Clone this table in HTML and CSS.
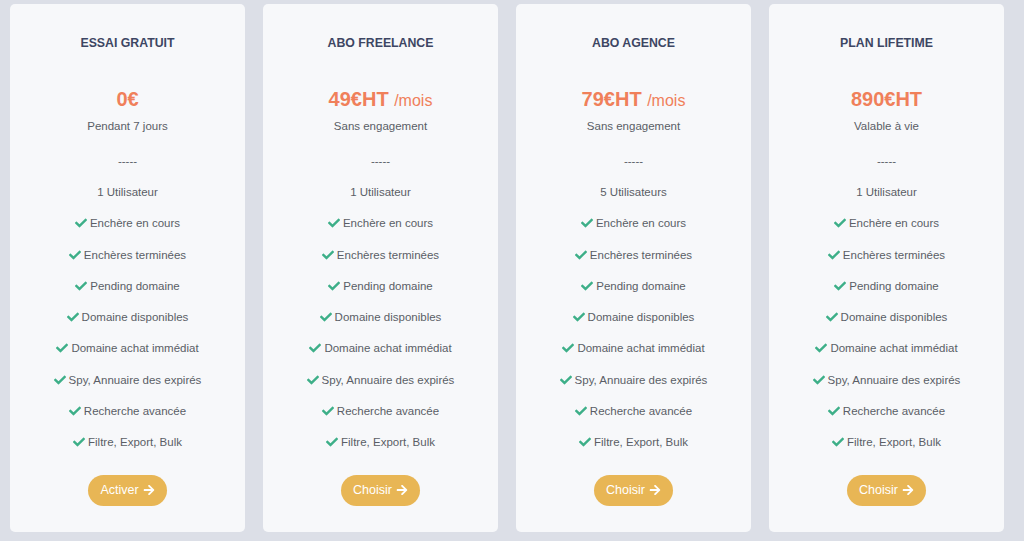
FILE: index.html
```html
<!DOCTYPE html>
<html lang="fr">
<head>
<meta charset="utf-8">
<link rel="stylesheet" href="styles.css">
</head>
<body>
<div class="plans">
  <div class="card">
    <h3 class="title">ESSAI GRATUIT</h3>
    <div class="price">0€</div>
    <div class="sub">Pendant 7 jours</div>
    <ul class="list">
      <li>-----</li>
      <li>1 Utilisateur</li>
      <li><svg class="chk" viewBox="0 0 512 512"><path d="M173.898 439.404l-166.4-166.4c-9.997-9.997-9.997-26.206 0-36.204l36.203-36.204c9.997-9.998 26.207-9.998 36.204 0L192 312.690 432.095 72.596c9.997-9.997 26.207-9.997 36.204 0l36.203 36.204c9.997 9.997 9.997 26.206 0 36.204l-294.4 294.401c-9.998 9.997-26.207 9.997-36.204-.001z"/></svg>Enchère en cours</li>
      <li><svg class="chk" viewBox="0 0 512 512"><path d="M173.898 439.404l-166.4-166.4c-9.997-9.997-9.997-26.206 0-36.204l36.203-36.204c9.997-9.998 26.207-9.998 36.204 0L192 312.690 432.095 72.596c9.997-9.997 26.207-9.997 36.204 0l36.203 36.204c9.997 9.997 9.997 26.206 0 36.204l-294.4 294.401c-9.998 9.997-26.207 9.997-36.204-.001z"/></svg>Enchères terminées</li>
      <li><svg class="chk" viewBox="0 0 512 512"><path d="M173.898 439.404l-166.4-166.4c-9.997-9.997-9.997-26.206 0-36.204l36.203-36.204c9.997-9.998 26.207-9.998 36.204 0L192 312.690 432.095 72.596c9.997-9.997 26.207-9.997 36.204 0l36.203 36.204c9.997 9.997 9.997 26.206 0 36.204l-294.4 294.401c-9.998 9.997-26.207 9.997-36.204-.001z"/></svg>Pending domaine</li>
      <li><svg class="chk" viewBox="0 0 512 512"><path d="M173.898 439.404l-166.4-166.4c-9.997-9.997-9.997-26.206 0-36.204l36.203-36.204c9.997-9.998 26.207-9.998 36.204 0L192 312.690 432.095 72.596c9.997-9.997 26.207-9.997 36.204 0l36.203 36.204c9.997 9.997 9.997 26.206 0 36.204l-294.4 294.401c-9.998 9.997-26.207 9.997-36.204-.001z"/></svg>Domaine disponibles</li>
      <li><svg class="chk" viewBox="0 0 512 512"><path d="M173.898 439.404l-166.4-166.4c-9.997-9.997-9.997-26.206 0-36.204l36.203-36.204c9.997-9.998 26.207-9.998 36.204 0L192 312.690 432.095 72.596c9.997-9.997 26.207-9.997 36.204 0l36.203 36.204c9.997 9.997 9.997 26.206 0 36.204l-294.4 294.401c-9.998 9.997-26.207 9.997-36.204-.001z"/></svg>Domaine achat immédiat</li>
      <li><svg class="chk" viewBox="0 0 512 512"><path d="M173.898 439.404l-166.4-166.4c-9.997-9.997-9.997-26.206 0-36.204l36.203-36.204c9.997-9.998 26.207-9.998 36.204 0L192 312.690 432.095 72.596c9.997-9.997 26.207-9.997 36.204 0l36.203 36.204c9.997 9.997 9.997 26.206 0 36.204l-294.4 294.401c-9.998 9.997-26.207 9.997-36.204-.001z"/></svg>Spy, Annuaire des expirés</li>
      <li><svg class="chk" viewBox="0 0 512 512"><path d="M173.898 439.404l-166.4-166.4c-9.997-9.997-9.997-26.206 0-36.204l36.203-36.204c9.997-9.998 26.207-9.998 36.204 0L192 312.690 432.095 72.596c9.997-9.997 26.207-9.997 36.204 0l36.203 36.204c9.997 9.997 9.997 26.206 0 36.204l-294.4 294.401c-9.998 9.997-26.207 9.997-36.204-.001z"/></svg>Recherche avancée</li>
      <li><svg class="chk" viewBox="0 0 512 512"><path d="M173.898 439.404l-166.4-166.4c-9.997-9.997-9.997-26.206 0-36.204l36.203-36.204c9.997-9.998 26.207-9.998 36.204 0L192 312.690 432.095 72.596c9.997-9.997 26.207-9.997 36.204 0l36.203 36.204c9.997 9.997 9.997 26.206 0 36.204l-294.4 294.401c-9.998 9.997-26.207 9.997-36.204-.001z"/></svg>Filtre, Export, Bulk</li>
    </ul>
    <a class="btn">Activer<svg class="arr" viewBox="0 0 448 512"><path d="M190.5 66.9l22.2-22.2c9.4-9.4 24.6-9.4 33.9 0L441 239c9.4 9.4 9.4 24.6 0 33.9L246.6 467.3c-9.4 9.4-24.6 9.4-33.900 0l-22.2-22.2c-9.5-9.5-9.3-25 .4-34.3L311.4 296H24c-13.3 0-24-10.7-24-24v-32c0-13.3 10.7-24 24-24h287.4L190.9 101.2c-9.8-9.3-10-24.8-.4-34.3z"/></svg></a>
  </div>

  <div class="card">
    <h3 class="title">ABO FREELANCE</h3>
    <div class="price">49€HT <span class="per">/mois</span></div>
    <div class="sub">Sans engagement</div>
    <ul class="list">
      <li>-----</li>
      <li>1 Utilisateur</li>
      <li><svg class="chk" viewBox="0 0 512 512"><path d="M173.898 439.404l-166.4-166.4c-9.997-9.997-9.997-26.206 0-36.204l36.203-36.204c9.997-9.998 26.207-9.998 36.204 0L192 312.690 432.095 72.596c9.997-9.997 26.207-9.997 36.204 0l36.203 36.204c9.997 9.997 9.997 26.206 0 36.204l-294.4 294.401c-9.998 9.997-26.207 9.997-36.204-.001z"/></svg>Enchère en cours</li>
      <li><svg class="chk" viewBox="0 0 512 512"><path d="M173.898 439.404l-166.4-166.4c-9.997-9.997-9.997-26.206 0-36.204l36.203-36.204c9.997-9.998 26.207-9.998 36.204 0L192 312.690 432.095 72.596c9.997-9.997 26.207-9.997 36.204 0l36.203 36.204c9.997 9.997 9.997 26.206 0 36.204l-294.4 294.401c-9.998 9.997-26.207 9.997-36.204-.001z"/></svg>Enchères terminées</li>
      <li><svg class="chk" viewBox="0 0 512 512"><path d="M173.898 439.404l-166.4-166.4c-9.997-9.997-9.997-26.206 0-36.204l36.203-36.204c9.997-9.998 26.207-9.998 36.204 0L192 312.690 432.095 72.596c9.997-9.997 26.207-9.997 36.204 0l36.203 36.204c9.997 9.997 9.997 26.206 0 36.204l-294.4 294.401c-9.998 9.997-26.207 9.997-36.204-.001z"/></svg>Pending domaine</li>
      <li><svg class="chk" viewBox="0 0 512 512"><path d="M173.898 439.404l-166.4-166.4c-9.997-9.997-9.997-26.206 0-36.204l36.203-36.204c9.997-9.998 26.207-9.998 36.204 0L192 312.690 432.095 72.596c9.997-9.997 26.207-9.997 36.204 0l36.203 36.204c9.997 9.997 9.997 26.206 0 36.204l-294.4 294.401c-9.998 9.997-26.207 9.997-36.204-.001z"/></svg>Domaine disponibles</li>
      <li><svg class="chk" viewBox="0 0 512 512"><path d="M173.898 439.404l-166.4-166.4c-9.997-9.997-9.997-26.206 0-36.204l36.203-36.204c9.997-9.998 26.207-9.998 36.204 0L192 312.690 432.095 72.596c9.997-9.997 26.207-9.997 36.204 0l36.203 36.204c9.997 9.997 9.997 26.206 0 36.204l-294.4 294.401c-9.998 9.997-26.207 9.997-36.204-.001z"/></svg>Domaine achat immédiat</li>
      <li><svg class="chk" viewBox="0 0 512 512"><path d="M173.898 439.404l-166.4-166.4c-9.997-9.997-9.997-26.206 0-36.204l36.203-36.204c9.997-9.998 26.207-9.998 36.204 0L192 312.690 432.095 72.596c9.997-9.997 26.207-9.997 36.204 0l36.203 36.204c9.997 9.997 9.997 26.206 0 36.204l-294.4 294.401c-9.998 9.997-26.207 9.997-36.204-.001z"/></svg>Spy, Annuaire des expirés</li>
      <li><svg class="chk" viewBox="0 0 512 512"><path d="M173.898 439.404l-166.4-166.4c-9.997-9.997-9.997-26.206 0-36.204l36.203-36.204c9.997-9.998 26.207-9.998 36.204 0L192 312.690 432.095 72.596c9.997-9.997 26.207-9.997 36.204 0l36.203 36.204c9.997 9.997 9.997 26.206 0 36.204l-294.4 294.401c-9.998 9.997-26.207 9.997-36.204-.001z"/></svg>Recherche avancée</li>
      <li><svg class="chk" viewBox="0 0 512 512"><path d="M173.898 439.404l-166.4-166.4c-9.997-9.997-9.997-26.206 0-36.204l36.203-36.204c9.997-9.998 26.207-9.998 36.204 0L192 312.690 432.095 72.596c9.997-9.997 26.207-9.997 36.204 0l36.203 36.204c9.997 9.997 9.997 26.206 0 36.204l-294.4 294.401c-9.998 9.997-26.207 9.997-36.204-.001z"/></svg>Filtre, Export, Bulk</li>
    </ul>
    <a class="btn">Choisir<svg class="arr" viewBox="0 0 448 512"><path d="M190.5 66.9l22.2-22.2c9.4-9.4 24.6-9.4 33.9 0L441 239c9.4 9.4 9.4 24.6 0 33.9L246.6 467.3c-9.4 9.4-24.6 9.4-33.900 0l-22.2-22.2c-9.5-9.5-9.3-25 .4-34.3L311.4 296H24c-13.3 0-24-10.7-24-24v-32c0-13.3 10.7-24 24-24h287.4L190.9 101.2c-9.8-9.3-10-24.8-.4-34.3z"/></svg></a>
  </div>

  <div class="card">
    <h3 class="title">ABO AGENCE</h3>
    <div class="price">79€HT <span class="per">/mois</span></div>
    <div class="sub">Sans engagement</div>
    <ul class="list">
      <li>-----</li>
      <li>5 Utilisateurs</li>
      <li><svg class="chk" viewBox="0 0 512 512"><path d="M173.898 439.404l-166.4-166.4c-9.997-9.997-9.997-26.206 0-36.204l36.203-36.204c9.997-9.998 26.207-9.998 36.204 0L192 312.690 432.095 72.596c9.997-9.997 26.207-9.997 36.204 0l36.203 36.204c9.997 9.997 9.997 26.206 0 36.204l-294.4 294.401c-9.998 9.997-26.207 9.997-36.204-.001z"/></svg>Enchère en cours</li>
      <li><svg class="chk" viewBox="0 0 512 512"><path d="M173.898 439.404l-166.4-166.4c-9.997-9.997-9.997-26.206 0-36.204l36.203-36.204c9.997-9.998 26.207-9.998 36.204 0L192 312.690 432.095 72.596c9.997-9.997 26.207-9.997 36.204 0l36.203 36.204c9.997 9.997 9.997 26.206 0 36.204l-294.4 294.401c-9.998 9.997-26.207 9.997-36.204-.001z"/></svg>Enchères terminées</li>
      <li><svg class="chk" viewBox="0 0 512 512"><path d="M173.898 439.404l-166.4-166.4c-9.997-9.997-9.997-26.206 0-36.204l36.203-36.204c9.997-9.998 26.207-9.998 36.204 0L192 312.690 432.095 72.596c9.997-9.997 26.207-9.997 36.204 0l36.203 36.204c9.997 9.997 9.997 26.206 0 36.204l-294.4 294.401c-9.998 9.997-26.207 9.997-36.204-.001z"/></svg>Pending domaine</li>
      <li><svg class="chk" viewBox="0 0 512 512"><path d="M173.898 439.404l-166.4-166.4c-9.997-9.997-9.997-26.206 0-36.204l36.203-36.204c9.997-9.998 26.207-9.998 36.204 0L192 312.690 432.095 72.596c9.997-9.997 26.207-9.997 36.204 0l36.203 36.204c9.997 9.997 9.997 26.206 0 36.204l-294.4 294.401c-9.998 9.997-26.207 9.997-36.204-.001z"/></svg>Domaine disponibles</li>
      <li><svg class="chk" viewBox="0 0 512 512"><path d="M173.898 439.404l-166.4-166.4c-9.997-9.997-9.997-26.206 0-36.204l36.203-36.204c9.997-9.998 26.207-9.998 36.204 0L192 312.690 432.095 72.596c9.997-9.997 26.207-9.997 36.204 0l36.203 36.204c9.997 9.997 9.997 26.206 0 36.204l-294.4 294.401c-9.998 9.997-26.207 9.997-36.204-.001z"/></svg>Domaine achat immédiat</li>
      <li><svg class="chk" viewBox="0 0 512 512"><path d="M173.898 439.404l-166.4-166.4c-9.997-9.997-9.997-26.206 0-36.204l36.203-36.204c9.997-9.998 26.207-9.998 36.204 0L192 312.690 432.095 72.596c9.997-9.997 26.207-9.997 36.204 0l36.203 36.204c9.997 9.997 9.997 26.206 0 36.204l-294.4 294.401c-9.998 9.997-26.207 9.997-36.204-.001z"/></svg>Spy, Annuaire des expirés</li>
      <li><svg class="chk" viewBox="0 0 512 512"><path d="M173.898 439.404l-166.4-166.4c-9.997-9.997-9.997-26.206 0-36.204l36.203-36.204c9.997-9.998 26.207-9.998 36.204 0L192 312.690 432.095 72.596c9.997-9.997 26.207-9.997 36.204 0l36.203 36.204c9.997 9.997 9.997 26.206 0 36.204l-294.4 294.401c-9.998 9.997-26.207 9.997-36.204-.001z"/></svg>Recherche avancée</li>
      <li><svg class="chk" viewBox="0 0 512 512"><path d="M173.898 439.404l-166.4-166.4c-9.997-9.997-9.997-26.206 0-36.204l36.203-36.204c9.997-9.998 26.207-9.998 36.204 0L192 312.690 432.095 72.596c9.997-9.997 26.207-9.997 36.204 0l36.203 36.204c9.997 9.997 9.997 26.206 0 36.204l-294.4 294.401c-9.998 9.997-26.207 9.997-36.204-.001z"/></svg>Filtre, Export, Bulk</li>
    </ul>
    <a class="btn">Choisir<svg class="arr" viewBox="0 0 448 512"><path d="M190.5 66.9l22.2-22.2c9.4-9.4 24.6-9.4 33.9 0L441 239c9.4 9.4 9.4 24.6 0 33.9L246.6 467.3c-9.4 9.4-24.6 9.4-33.900 0l-22.2-22.2c-9.5-9.5-9.3-25 .4-34.3L311.4 296H24c-13.3 0-24-10.7-24-24v-32c0-13.3 10.7-24 24-24h287.4L190.9 101.2c-9.8-9.3-10-24.8-.4-34.3z"/></svg></a>
  </div>

  <div class="card">
    <h3 class="title">PLAN LIFETIME</h3>
    <div class="price">890€HT</div>
    <div class="sub">Valable à vie</div>
    <ul class="list">
      <li>-----</li>
      <li>1 Utilisateur</li>
      <li><svg class="chk" viewBox="0 0 512 512"><path d="M173.898 439.404l-166.4-166.4c-9.997-9.997-9.997-26.206 0-36.204l36.203-36.204c9.997-9.998 26.207-9.998 36.204 0L192 312.690 432.095 72.596c9.997-9.997 26.207-9.997 36.204 0l36.203 36.204c9.997 9.997 9.997 26.206 0 36.204l-294.4 294.401c-9.998 9.997-26.207 9.997-36.204-.001z"/></svg>Enchère en cours</li>
      <li><svg class="chk" viewBox="0 0 512 512"><path d="M173.898 439.404l-166.4-166.4c-9.997-9.997-9.997-26.206 0-36.204l36.203-36.204c9.997-9.998 26.207-9.998 36.204 0L192 312.690 432.095 72.596c9.997-9.997 26.207-9.997 36.204 0l36.203 36.204c9.997 9.997 9.997 26.206 0 36.204l-294.4 294.401c-9.998 9.997-26.207 9.997-36.204-.001z"/></svg>Enchères terminées</li>
      <li><svg class="chk" viewBox="0 0 512 512"><path d="M173.898 439.404l-166.4-166.4c-9.997-9.997-9.997-26.206 0-36.204l36.203-36.204c9.997-9.998 26.207-9.998 36.204 0L192 312.690 432.095 72.596c9.997-9.997 26.207-9.997 36.204 0l36.203 36.204c9.997 9.997 9.997 26.206 0 36.204l-294.4 294.401c-9.998 9.997-26.207 9.997-36.204-.001z"/></svg>Pending domaine</li>
      <li><svg class="chk" viewBox="0 0 512 512"><path d="M173.898 439.404l-166.4-166.4c-9.997-9.997-9.997-26.206 0-36.204l36.203-36.204c9.997-9.998 26.207-9.998 36.204 0L192 312.690 432.095 72.596c9.997-9.997 26.207-9.997 36.204 0l36.203 36.204c9.997 9.997 9.997 26.206 0 36.204l-294.4 294.401c-9.998 9.997-26.207 9.997-36.204-.001z"/></svg>Domaine disponibles</li>
      <li><svg class="chk" viewBox="0 0 512 512"><path d="M173.898 439.404l-166.4-166.4c-9.997-9.997-9.997-26.206 0-36.204l36.203-36.204c9.997-9.998 26.207-9.998 36.204 0L192 312.690 432.095 72.596c9.997-9.997 26.207-9.997 36.204 0l36.203 36.204c9.997 9.997 9.997 26.206 0 36.204l-294.4 294.401c-9.998 9.997-26.207 9.997-36.204-.001z"/></svg>Domaine achat immédiat</li>
      <li><svg class="chk" viewBox="0 0 512 512"><path d="M173.898 439.404l-166.4-166.4c-9.997-9.997-9.997-26.206 0-36.204l36.203-36.204c9.997-9.998 26.207-9.998 36.204 0L192 312.690 432.095 72.596c9.997-9.997 26.207-9.997 36.204 0l36.203 36.204c9.997 9.997 9.997 26.206 0 36.204l-294.4 294.401c-9.998 9.997-26.207 9.997-36.204-.001z"/></svg>Spy, Annuaire des expirés</li>
      <li><svg class="chk" viewBox="0 0 512 512"><path d="M173.898 439.404l-166.4-166.4c-9.997-9.997-9.997-26.206 0-36.204l36.203-36.204c9.997-9.998 26.207-9.998 36.204 0L192 312.690 432.095 72.596c9.997-9.997 26.207-9.997 36.204 0l36.203 36.204c9.997 9.997 9.997 26.206 0 36.204l-294.4 294.401c-9.998 9.997-26.207 9.997-36.204-.001z"/></svg>Recherche avancée</li>
      <li><svg class="chk" viewBox="0 0 512 512"><path d="M173.898 439.404l-166.4-166.4c-9.997-9.997-9.997-26.206 0-36.204l36.203-36.204c9.997-9.998 26.207-9.998 36.204 0L192 312.690 432.095 72.596c9.997-9.997 26.207-9.997 36.204 0l36.203 36.204c9.997 9.997 9.997 26.206 0 36.204l-294.4 294.401c-9.998 9.997-26.207 9.997-36.204-.001z"/></svg>Filtre, Export, Bulk</li>
    </ul>
    <a class="btn">Choisir<svg class="arr" viewBox="0 0 448 512"><path d="M190.5 66.9l22.2-22.2c9.4-9.4 24.6-9.4 33.9 0L441 239c9.4 9.4 9.4 24.6 0 33.9L246.6 467.3c-9.4 9.4-24.6 9.4-33.900 0l-22.2-22.2c-9.5-9.5-9.3-25 .4-34.3L311.4 296H24c-13.3 0-24-10.7-24-24v-32c0-13.3 10.7-24 24-24h287.4L190.9 101.2c-9.8-9.3-10-24.8-.4-34.3z"/></svg></a>
  </div>
</div>
</body>
</html>
```

FILE: styles.css
```css
html, body {
  margin: 0;
  padding: 0;
  background: #dcdfe7;
  font-family: "Liberation Sans", Arial, sans-serif;
}
.plans {
  display: flex;
  gap: 18px;
  padding: 4px 20px 9px 10px;
}
.card {
  width: 235px;
  height: 528px;
  box-sizing: border-box;
  background: #f7f8fa;
  border-radius: 5px;
  display: flex;
  flex-direction: column;
  align-items: center;
  padding-top: 31px;
}
.title {
  margin: 0;
  font-size: 12.3px;
  line-height: 16px;
  font-weight: 700;
  color: #3d4663;
}
.price {
  margin-top: 36px;
  font-size: 20px;
  line-height: 24px;
  font-weight: 700;
  color: #f0805a;
}
.per {
  font-weight: 400;
  font-size: 16px;
  line-height: 1;
}
.sub {
  margin-top: 7px;
  font-size: 11.5px;
  line-height: 16px;
  color: #5a5e66;
}
.list {
  list-style: none;
  margin: 11px 0 0;
  padding: 0;
  font-size: 11.5px;
  color: #5a5e66;
}
.list li {
  height: 31.3px;
  display: flex;
  align-items: center;
  justify-content: center;
}
.chk {
  width: 12px;
  height: 12px;
  fill: #3daf88;
  margin-right: 3px;
}
.btn {
  margin-top: 17px;
  height: 31px;
  padding: 0 12px;
  border-radius: 16px;
  background: #e8b655;
  color: #fff;
  font-size: 12.5px;
  display: flex;
  align-items: center;
  gap: 4px;
}
.arr {
  width: 12px;
  height: 12px;
  fill: #fff;
}
```
